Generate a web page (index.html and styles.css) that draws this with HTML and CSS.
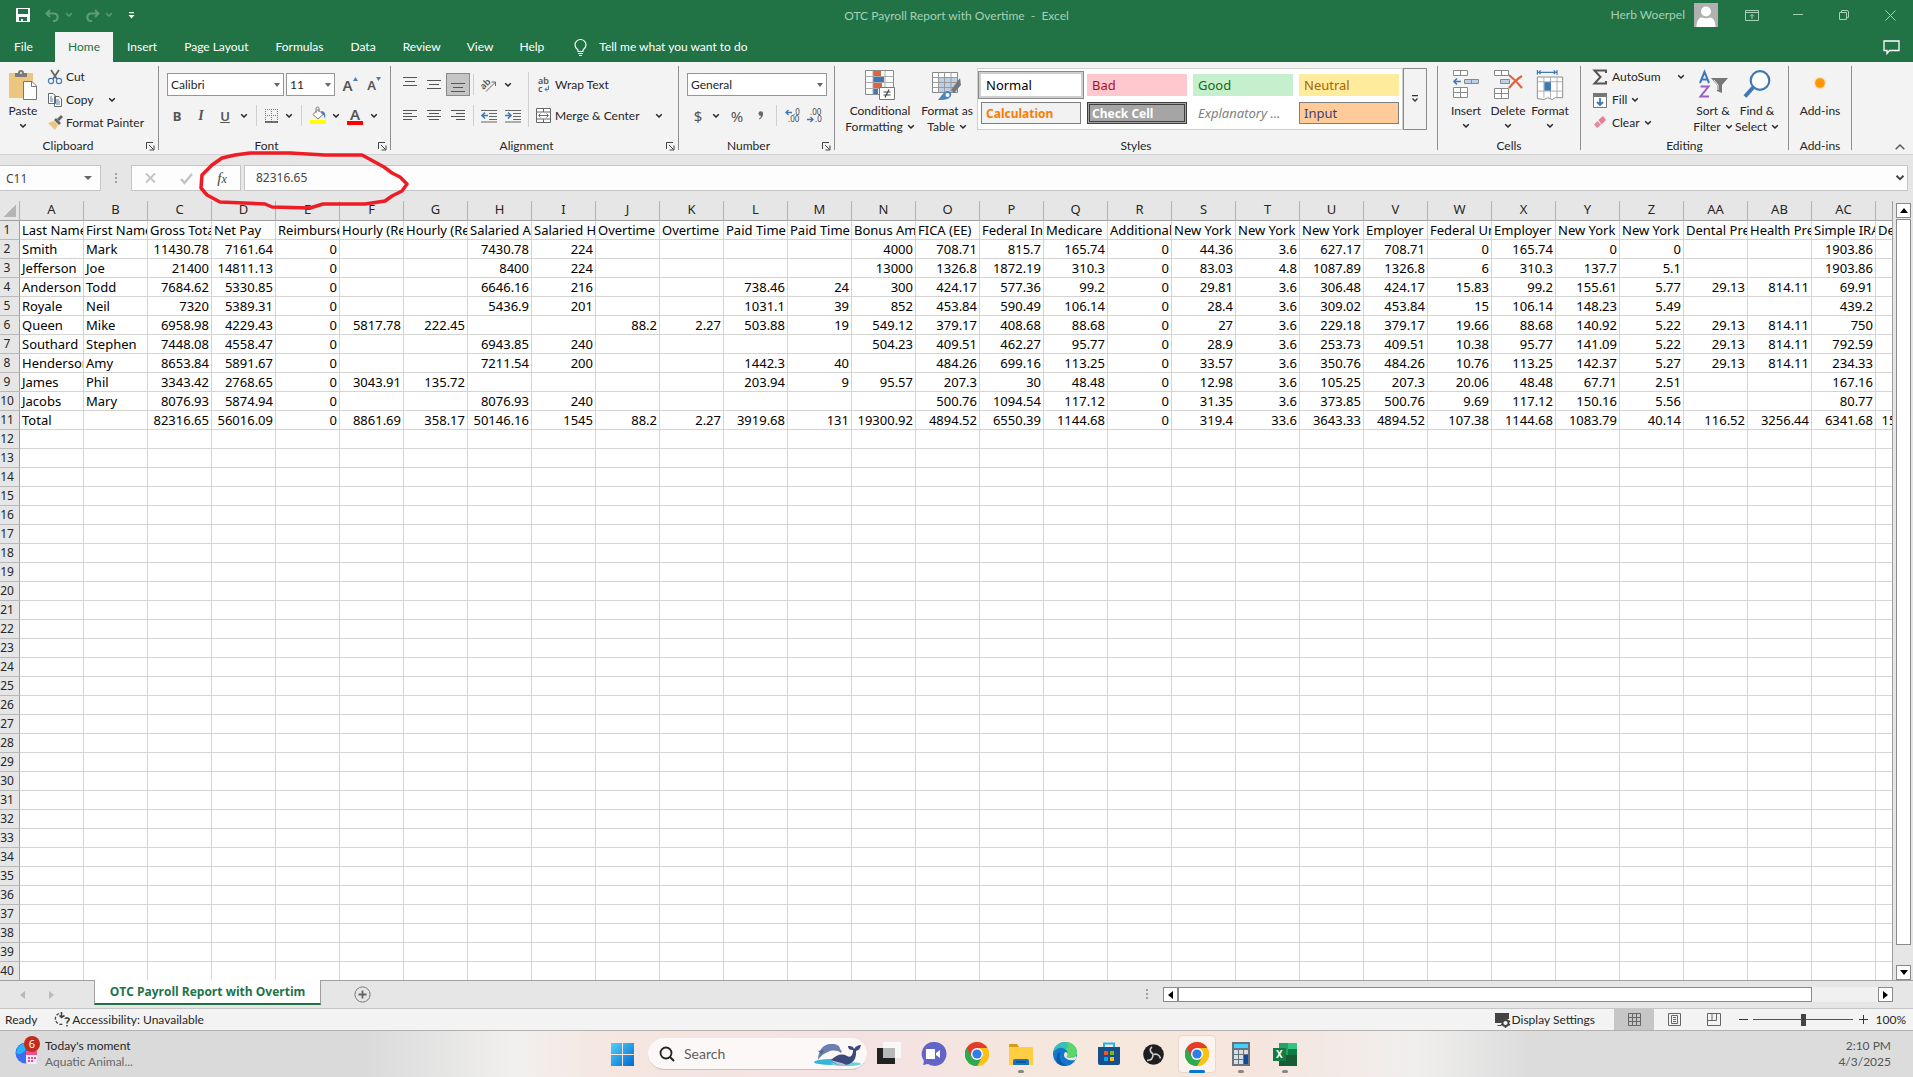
FILE: index.html
```
<!DOCTYPE html>
<html lang="en">
<head>
<meta charset="utf-8">
<title>OTC Payroll Report with Overtime - Excel</title>
<link rel="stylesheet" href="styles.css">
</head>
<body>
<svg class="defs" aria-hidden="true">
  <symbol id="chev" viewBox="0 0 8 6"><path d="M1.2 1.2 4 4l2.800-2.800" fill="none" stroke="currentColor" stroke-width="1.500"/></symbol>
  <symbol id="launch" viewBox="0 0 9 9"><path d="M.5 7V.5H7M3 3l4.500 4.500M8 3.500V8H3.500" fill="none" stroke="#444" stroke-width="1"/></symbol>
  <symbol id="chrome" viewBox="0 0 24 24"><circle cx="12" cy="12" r="12" fill="#fbc116"/><path d="M1.600 6A12 12 0 0 0 12 24l5.200-9L12 12z" fill="#2da94f"/><path d="M12 6h10.400A12 12 0 0 1 12 24l5.200-9z" fill="#fbc116"/><path d="M1.600 6 6.800 15 12 12V6h10.400A12 12 0 0 0 1.600 6z" fill="#e33b2e"/><path d="M1.600 6A12 12 0 0 0 12 24l5.200-9H6.800z" fill="#2da94f"/><circle cx="12" cy="12" r="6" fill="#fff"/><circle cx="12" cy="12" r="4.600" fill="#2f7de9"/></symbol>
</svg>

<header class="top">
  <div class="titlebar">
    <div class="quick">
      <button aria-label="Save"><svg width="14" height="14" viewBox="0 0 14 14"><path d="M0 0h14v14H0z" fill="#fff"/><path d="M2 1h10v5H2zM3 9h8v4H3z" fill="#217346"/><path d="M5 11h2v2H5z" fill="#fff"/></svg></button>
      <button class="dim" aria-label="Undo"><svg width="15" height="13" viewBox="0 0 15 13"><path d="M5 1 1.500 4.500 5 8M2 4.500h7.500a3.800 3.800 0 0 1 0 7.500H8" fill="none" stroke="currentColor" stroke-width="2"/></svg></button>
      <button class="dim" aria-label="Undo list"><svg width="8" height="6"><use href="#chev"/></svg></button>
      <button class="dim" aria-label="Redo"><svg width="15" height="13" viewBox="0 0 15 13"><path d="M10 1l3.500 3.500L10 8M13 4.500H5.500a3.800 3.800 0 0 0 0 7.500H7" fill="none" stroke="currentColor" stroke-width="2"/></svg></button>
      <button class="dim" aria-label="Redo list"><svg width="8" height="6"><use href="#chev"/></svg></button>
      <button aria-label="Customize toolbar"><svg width="7" height="7" viewBox="0 0 7 7"><path d="M1 0h5v1.300H1zM.5 3h6l-3 3.500z" fill="#fff"/></svg></button>
    </div>
    <h1>OTC Payroll Report with Overtime&nbsp; -&nbsp; Excel</h1>
    <div class="winbar">
      <span>Herb Woerpel</span>
      <svg class="avatar" width="24" height="24" viewBox="0 0 24 24"><path d="M0 0h24v24H0z" fill="#b0b0b0"/><circle cx="12" cy="8.500" r="5" fill="#fff"/><path d="M2.500 24c0-7 3-9.500 5.500-9.500 2 1 6 1 8 0 2.500 0 5.500 2.500 5.500 9.500z" fill="#fff"/></svg>
      <button aria-label="Ribbon display options"><svg width="14" height="11" viewBox="0 0 14 11"><path d="M.5.500h13v10H.5zM.5 2.500h13M7 9V4.500M5 6.300 7 4.300l2 2" fill="none" stroke="currentColor"/></svg></button>
      <button aria-label="Minimize"><svg width="10" height="2" viewBox="0 0 10 2"><path d="M0 .5h10" stroke="currentColor"/></svg></button>
      <button aria-label="Restore"><svg width="10" height="10" viewBox="0 0 10 10"><path d="M.5 2.500h7v7h-7zM2.500 2V.5H8q1.500 0 1.500 1.500v5.500H8" fill="none" stroke="currentColor"/></svg></button>
      <button aria-label="Close"><svg width="11" height="11" viewBox="0 0 11 11"><path d="M.5.500l10 10M10.500.500l-10 10" stroke="currentColor"/></svg></button>
    </div>
  </div>
  <nav class="tabs">
    <button class="file">File</button>
    <button class="active">Home</button>
    <button>Insert</button>
    <button>Page Layout</button>
    <button>Formulas</button>
    <button>Data</button>
    <button>Review</button>
    <button>View</button>
    <button>Help</button>
    <button class="tell"><svg width="13" height="17" viewBox="0 0 13 17"><path d="M4 12.500V11C2 9.500 1 8 1 6a5.500 5.500 0 0 1 11 0c0 2-1 3.500-3 5v1.500zM4 14.500h5M5 16.500h3" fill="none" stroke="#fff" stroke-width="1.200"/></svg>Tell me what you want to do</button>
    <button class="comments" aria-label="Comments"><svg width="17" height="15" viewBox="0 0 17 15"><path d="M1 1h15v9.500H6.500L4 13.500v-3H1z" fill="none" stroke="#fff" stroke-width="1.300"/></svg></button>
  </nav>
</header>

<section class="ribbon" aria-label="Ribbon">
  <div class="group clipboard">
    <div class="body">
      <button class="big paste"><svg width="30" height="30" viewBox="0 0 30 30"><path d="M1 3h24v25H1z" fill="#ecc57f"/><path d="M7 3h3a3 3 0 0 1 6 0h3v4H7z" fill="#7a7a7a"/><circle cx="13" cy="3" r="1" fill="#f3f3f3"/><path d="M15.500 11.500H24l4.500 4.500v13.500h-13z" fill="#fff" stroke="#777"/><path d="M23.500 11.500v5h5" fill="none" stroke="#777"/></svg><span>Paste</span><svg width="8" height="6"><use href="#chev"/></svg></button>
      <div class="stack">
        <button><svg width="16" height="16" viewBox="0 0 16 16"><path d="M4 1l6 9M12 1 6 10" stroke="#666" stroke-width="1.800"/><circle cx="4" cy="12" r="2.600" fill="none" stroke="#4a7fb5" stroke-width="1.200"/><circle cx="12" cy="12" r="2.600" fill="none" stroke="#4a7fb5" stroke-width="1.200"/></svg>Cut</button>
        <button><svg width="16" height="16" viewBox="0 0 16 16"><path d="M1.500 1.500H6L8.500 4v7.500h-7zM7.500 4.500H12L14.500 7v7.500h-7z" fill="#fff" stroke="#666"/><path d="M3 5h2M3 7h3M3 9h3M9 8h3M9 10h4M9 12h4" stroke="#4a7fb5"/></svg><span>Copy</span><svg width="8" height="6"><use href="#chev"/></svg></button>
        <button><svg width="16" height="16" viewBox="0 0 16 16"><path d="M1 8l6-2 4 4-3 5z" fill="#ecc57f"/><path d="M7 5l2-2 5 5-2 2z" fill="#666"/><path d="M11 5l4-4" stroke="#666" stroke-width="3"/></svg>Format Painter</button>
      </div>
    </div>
    <div class="label"><span>Clipboard</span><button aria-label="Clipboard settings"><svg width="9" height="9"><use href="#launch"/></svg></button></div>
  </div>

  <div class="group font">
    <div class="body rows">
      <div class="row">
        <div class="combo face"><select aria-label="Font"><option>Calibri</option></select></div>
        <div class="combo size"><select aria-label="Font size"><option>11</option></select></div>
        <button class="t grow">A<svg width="5" height="4" viewBox="0 0 5 4"><path d="M0 4 2.500 0 5 4z" fill="#4a7fb5"/></svg></button>
        <button class="t shrink">A<svg width="5" height="4" viewBox="0 0 5 4"><path d="M0 0 2.500 4 5 0z" fill="#4a7fb5"/></svg></button>
      </div>
      <div class="row letters">
        <button class="t"><b>B</b></button><button class="t"><i>I</i></button><button class="t"><u>U</u></button><button class="ch" aria-label="Underline styles"><svg width="8" height="6"><use href="#chev"/></svg></button>
        <span class="sep"></span>
        <button class="t w20" aria-label="Borders"><svg width="14" height="14" viewBox="0 0 14 14"><path d="M.5 0v13M6.500 0v13M12.500 0v13M0 .5h13M0 6.500h13" stroke="#777" stroke-dasharray="1 1"/><path d="M0 13h13" stroke="#444" stroke-width="1.500"/></svg></button><button class="ch" aria-label="Border styles"><svg width="8" height="6"><use href="#chev"/></svg></button>
        <span class="sep"></span>
        <button class="t w22" aria-label="Fill color"><svg width="17" height="17" viewBox="0 0 17 17"><path d="M3 7.500 8 2.500l5 5-5 4.500z" fill="#fff" stroke="#777"/><path d="M6 6V1.500a1.500 1.500 0 0 1 3 0V5" fill="none" stroke="#777"/><path d="M11 4c4 0 5 3 4 8-1-3-1-4-3-5z" fill="#4a7fb5"/><path d="M0 13h16v4H0z" fill="#ff0"/></svg></button><button class="ch" aria-label="Fill colors"><svg width="8" height="6"><use href="#chev"/></svg></button>
        <button class="t inkcolor">A</button><button class="ch" aria-label="Font colors"><svg width="8" height="6"><use href="#chev"/></svg></button>
      </div>
    </div>
    <div class="label"><span>Font</span><button aria-label="Font settings"><svg width="9" height="9"><use href="#launch"/></svg></button></div>
  </div>

  <div class="group alignment">
    <div class="body">
      <div class="rows">
        <div class="row">
          <button class="t" aria-label="Top align"><svg width="14" height="16" viewBox="0 0 14 16"><path d="M0 .5h14M2 4.500h10M0 8.500h14" stroke="#555"/></svg></button>
          <button class="t" aria-label="Middle align"><svg width="14" height="16" viewBox="0 0 14 16"><path d="M0 3.500h14M2 7.500h10M0 11.500h14" stroke="#555"/></svg></button>
          <button class="t pressed" aria-label="Bottom align"><svg width="14" height="16" viewBox="0 0 14 16"><path d="M0 6.500h14M2 10.500h10M0 14.500h14" stroke="#555"/></svg></button>
          <span class="sep tight"></span>
          <button class="t" aria-label="Orientation"><svg width="17" height="17" viewBox="0 0 17 17"><text x="0" y="10" transform="rotate(-45 6 9)" class="ico-text">ab</text><path d="M5 15.500 14 6.500M10.500 6h4v4" fill="none" stroke="#666"/></svg></button><button class="ch" aria-label="Orientations"><svg width="8" height="6"><use href="#chev"/></svg></button>
        </div>
        <div class="row">
          <button class="t" aria-label="Align left"><svg width="14" height="11" viewBox="0 0 14 11"><path d="M0 .5h14M0 3.500h9M0 6.500h14M0 9.500h9" stroke="#555"/></svg></button>
          <button class="t" aria-label="Center"><svg width="14" height="11" viewBox="0 0 14 11"><path d="M0 .5h14M2 3.500h10M0 6.500h14M2 9.500h10" stroke="#555"/></svg></button>
          <button class="t" aria-label="Align right"><svg width="14" height="11" viewBox="0 0 14 11"><path d="M0 .5h14M5 3.500h9M0 6.500h14M5 9.500h9" stroke="#555"/></svg></button>
          <span class="sep tight"></span>
          <button class="t" aria-label="Decrease indent"><svg width="16" height="14" viewBox="0 0 16 14"><path d="M0 1.500h16M8 4.500h8M8 7.500h8M8 10.500h8M0 13h16" stroke="#666"/><path d="M7 6.500H2M4 3.500l-3 3 3 3" fill="none" stroke="#3f78b4" stroke-width="1.600"/></svg></button>
          <button class="t" aria-label="Increase indent"><svg width="16" height="14" viewBox="0 0 16 14"><path d="M0 1.500h16M8 4.500h8M8 7.500h8M8 10.500h8M0 13h16" stroke="#666"/><path d="M0 6.500h5M3 3.500l3 3-3 3" fill="none" stroke="#3f78b4" stroke-width="1.600"/></svg></button>
        </div>
      </div>
      <span class="sep long"></span>
      <div class="rows wide">
        <div class="row"><button class="wordy"><svg width="16" height="17" viewBox="0 0 16 17"><text x="2" y="8" class="ico-text">ab</text><text x="2" y="16" class="ico-text">c</text><path d="M12.500 9.500v4H9M11 11.500l-2 2 2 2" fill="none" stroke="#3f78b4"/></svg>Wrap Text</button></div>
        <div class="row"><button class="wordy"><svg width="16" height="16" viewBox="0 0 16 16"><path d="M.5.500h14v14H.5zM.5 4h14M.5 11h14M7.500.500V4M7.500 11v3.500" fill="#fff" stroke="#666"/><path d="M3 7.500h9M4.500 5.500l-2 2 2 2M10.500 5.500l2 2-2 2" fill="none" stroke="#3f78b4"/></svg>Merge &amp; Center</button><button class="ch" aria-label="Merge options"><svg width="8" height="6"><use href="#chev"/></svg></button></div>
      </div>
    </div>
    <div class="label"><span>Alignment</span><button aria-label="Alignment settings"><svg width="9" height="9"><use href="#launch"/></svg></button></div>
  </div>

  <div class="group number">
    <div class="body rows">
      <div class="row"><div class="combo format"><select aria-label="Number format"><option>General</option></select></div></div>
      <div class="row">
        <button class="t w22 sym">$</button><button class="ch" aria-label="Currencies"><svg width="8" height="6"><use href="#chev"/></svg></button>
        <button class="t w28 sym">%</button><button class="t w20 comma" aria-label="Comma style"><svg width="6" height="9" viewBox="0 0 6 9"><path d="M.5 2.500a2.300 2.300 0 0 1 4.600 0c0 3-1.600 5-3.800 6l-.3-.8C2.200 7 2.900 6 3 4.800 1.500 5 .5 3.800.5 2.500z" fill="#666"/></svg></button>
        <span class="sep"></span>
        <button class="t w22" aria-label="Increase decimal"><svg width="16" height="14" viewBox="0 0 16 14"><text x="8" y="6" class="dec">.0</text><text x="3" y="13" class="dec">.00</text><path d="M7 3.500H1M3.500 1 1 3.500 3.500 6" fill="none" stroke="#3f78b4" stroke-width="1.300"/></svg></button>
        <button class="t w22" aria-label="Decrease decimal"><svg width="16" height="14" viewBox="0 0 16 14"><text x="3" y="6" class="dec">.00</text><text x="8" y="13" class="dec">.0</text><path d="M0 10.500h6M3.500 8 6 10.500 3.500 13" fill="none" stroke="#3f78b4" stroke-width="1.300"/></svg></button>
      </div>
    </div>
    <div class="label"><span>Number</span><button aria-label="Number settings"><svg width="9" height="9"><use href="#launch"/></svg></button></div>
  </div>

  <div class="group styles">
    <div class="body">
      <button class="big cond"><svg width="30" height="30" viewBox="0 0 30 30"><path d="M.5.500h28v24H.5z" fill="#fff" stroke="#888"/><path d="M8 1h8v5H8zM8 13h9v5H8z" fill="#e0623f"/><path d="M8 7h11v5H8zM8 19h5v5H8z" fill="#3f78b4"/><path d="M.5 6.500h28M.5 12.500h28M.5 18.500h28M8 .5v24M20 .5v24" stroke="#aaa" fill="none"/><path d="M14.500 17.500h15v12h-15z" fill="#fff" stroke="#777"/><path d="M18.500 22h7M18.500 25h7M24 19.500l-4 8" stroke="#444" stroke-width="1.200"/></svg><span>Conditional</span><span>Formatting <svg width="8" height="6"><use href="#chev"/></svg></span></button>
      <button class="big fmt"><svg width="30" height="30" viewBox="0 0 30 30"><path d="M.5 2.500h25v20H.5z" fill="#fff" stroke="#888"/><path d="M7 8h18v14H7z" fill="#bcd0e8"/><path d="M.5 7.500h25M.5 12.500h25M.5 17.500h25M6.500 2.500v20M12.500 2.500v20M19 2.500v20" stroke="#9a9a9a" fill="none"/><path d="M19 20 28 8l1 7-7 8z" fill="#777"/><path d="M6 30c3-3 5-8 9-9 3 0 5 2 4 5-2 4-8 4-13 4z" fill="#4a85bf"/><circle cx="15.500" cy="25" r="2" fill="#fff"/></svg><span>Format as</span><span>Table <svg width="8" height="6"><use href="#chev"/></svg></span></button>
      <div class="gallery">
        <div class="swatches">
          <button class="s-normal">Normal</button><button class="s-bad">Bad</button><button class="s-good">Good</button><button class="s-neutral">Neutral</button>
          <button class="s-calc">Calculation</button><button class="s-check">Check Cell</button><button class="s-expl">Explanatory ...</button><button class="s-input">Input</button>
        </div>
        <button class="more" aria-label="More styles"><svg width="8" height="8" viewBox="0 0 8 8"><path d="M1 .7h6M1.500 3.500 4 6l2.500-2.500" fill="none" stroke="#333" stroke-width="1.300"/></svg></button>
      </div>
    </div>
    <div class="label"><span>Styles</span></div>
  </div>

  <div class="group cells">
    <div class="body">
      <button class="big"><svg width="28" height="30" viewBox="0 0 28 30"><path d="M1.500.500h14v5h-14zM8.500.500v5M1.500 17.500h14v10h-14zM1.500 22.500h14M8.500 17.500v10" fill="#fff" stroke="#888"/><path d="M12.500 9.500h14v4h-14zM19.500 9.500v4" fill="#bcd0e8" stroke="#888"/><path d="M9 11.500H2.500M5 8.500l-3 3 3 3" fill="none" stroke="#3f78b4" stroke-width="1.600"/></svg><span>Insert</span><svg width="8" height="6"><use href="#chev"/></svg></button>
      <button class="big"><svg width="30" height="30" viewBox="0 0 30 30"><path d="M1.500.500h14v5h-14zM8.500.500v5M1.500 18.500h14v10h-14zM1.500 23.500h14M8.500 18.500v10" fill="#fff" stroke="#888"/><path d="M7.500 9.500h9v4h-9z" fill="#bcd0e8" stroke="#888"/><path d="M16 5c5 4 9 8 13 13M29 6c-5 3-9 7-13 12" fill="none" stroke="#e0623f" stroke-width="2.200"/></svg><span>Delete</span><svg width="8" height="6"><use href="#chev"/></svg></button>
      <button class="big"><svg width="30" height="32" viewBox="0 0 30 32"><path d="M1 2.500h22M1.500 0v5M22.500 0v5M5 .5l-2 2 2 2M19 .5l2 2-2 2" fill="none" stroke="#3f78b4" stroke-width="1.200"/><path d="M1.500 7.500h27v22h-8l-3 2-5-2-4 2-7-1z" fill="#fff" stroke="#888"/><path d="M1.500 12.500h27M1.500 22.500h27M8.500 7.500v22M15.500 7.500v22M22.500 7.500v22" stroke="#aaa" fill="none"/><path d="M9 13h7v9H9z" fill="#3f78b4"/></svg><span>Format</span><svg width="8" height="6"><use href="#chev"/></svg></button>
    </div>
    <div class="label"><span>Cells</span></div>
  </div>

  <div class="group editing">
    <div class="body">
      <div class="stack">
        <button><svg width="16" height="16" viewBox="0 0 16 16"><path d="M14 4V1.500H2.500L8.500 8l-6 6.500H14V12" fill="none" stroke="#555" stroke-width="2"/></svg><span>AutoSum</span><svg width="8" height="6"><use href="#chev"/></svg></button>
        <button><svg width="16" height="16" viewBox="0 0 16 16"><path d="M1.500 1.500h13v14h-13z" fill="#fff" stroke="#777"/><path d="M1 1h14v4H1z" fill="#777"/><path d="M8 6v7M5 10l3 3 3-3" fill="none" stroke="#3f78b4" stroke-width="1.800"/></svg>Fill<svg width="8" height="6"><use href="#chev"/></svg></button>
        <button><svg width="16" height="16" viewBox="0 0 16 16"><path d="M6.500 5 11 1l3 4-4.500 4.500z" fill="#e77e92"/><path d="M5.500 6 9 10l-4 3-3-3.500z" fill="#e58b9c"/></svg>Clear<svg width="8" height="6"><use href="#chev"/></svg></button>
      </div>
      <button class="big"><svg width="30" height="30" viewBox="0 0 30 30"><path d="M2 13 6.500 2 11 13M3.500 9.500h6" fill="none" stroke="#3f78b4" stroke-width="2"/><path d="M2.500 16.500h8l-8 10H11" fill="none" stroke="#9b5fc0" stroke-width="2"/><path d="M13 8h17l-6 7v8l-5-2v-6z" fill="#777"/><path d="M16 10l4 5v5" fill="none" stroke="#f3f3f3"/></svg><span>Sort &amp;</span><span>Filter <svg width="8" height="6"><use href="#chev"/></svg></span></button>
      <button class="big"><svg width="30" height="30" viewBox="0 0 30 30"><circle cx="18" cy="10.500" r="9.300" fill="#fff" stroke="#3f78b4" stroke-width="2.200"/><path d="M11.500 17 3 26.500" stroke="#3f78b4" stroke-width="4"/></svg><span>Find &amp;</span><span>Select <svg width="8" height="6"><use href="#chev"/></svg></span></button>
    </div>
    <div class="label"><span>Editing</span></div>
  </div>

  <div class="group addins">
    <div class="body"><button class="big"><svg width="30" height="30" viewBox="0 0 30 30"><circle cx="15" cy="13" r="6" fill="#ffd08a" opacity=".7"/><circle cx="15" cy="13" r="4.800" fill="#ff9500"/></svg><span>Add-ins</span></button></div>
    <div class="label"><span>Add-ins</span></div>
  </div>
  <div class="tail"><button aria-label="Collapse ribbon"><svg width="10" height="6" viewBox="0 0 10 6"><path d="M.7 5.300 5 1l4.300 4.300" fill="none" stroke="#555" stroke-width="1.400"/></svg></button></div>
</section>

<section class="formula" aria-label="Formula bar">
  <div class="namebox"><input aria-label="Name box" value="C11"></div>
  <span class="grip"></span>
  <div class="fxbox">
    <button aria-label="Cancel"><svg width="11" height="10" viewBox="0 0 11 10"><path d="M1 .5l9 9M10 .5l-9 9" stroke="#c3c3c3" stroke-width="1.800"/></svg></button>
    <button aria-label="Enter"><svg width="13" height="11" viewBox="0 0 13 11"><path d="M1 6l3.500 4L12 1" fill="none" stroke="#c3c3c3" stroke-width="2.400"/></svg></button>
    <button class="fx"><i>f<small>x</small></i></button>
  </div>
  <div class="entry"><input aria-label="Formula" value="82316.65"><button aria-label="Expand formula bar"><svg width="10" height="8"><use href="#chev"/></svg></button></div>
</section>

<main class="work">
  <div class="sheet"><table><colgroup id="cols"></colgroup><thead id="head"></thead><tbody id="rows"></tbody></table></div>
  <div class="vscroll">
    <button aria-label="Scroll up"><svg width="8" height="5" viewBox="0 0 8 5"><path d="M0 5 4 0l4 5z"/></svg></button>
    <span class="thumb"></span>
    <button aria-label="Scroll down"><svg width="8" height="5" viewBox="0 0 8 5"><path d="M0 0 4 5l4-5z"/></svg></button>
  </div>
</main>

<div class="sheettabs">
  <button class="nav" aria-label="Previous sheet"><svg width="5" height="8" viewBox="0 0 5 8"><path d="M5 0 0 4l5 4z" fill="#b9b9b9"/></svg></button>
  <button class="nav" aria-label="Next sheet"><svg width="5" height="8" viewBox="0 0 5 8"><path d="M0 0l5 4-5 4z" fill="#b9b9b9"/></svg></button>
  <button class="tab">OTC Payroll Report with Overtim</button>
  <button class="add" aria-label="New sheet"><svg width="17" height="17" viewBox="0 0 17 17"><circle cx="8.500" cy="8.500" r="7.600" fill="none" stroke="#777"/><path d="M8.500 4.500v8M4.500 8.500h8" stroke="#666" stroke-width="1.800"/></svg></button>
  <span class="grip"></span>
  <div class="hscroll">
    <button aria-label="Scroll left"><svg width="5" height="8" viewBox="0 0 5 8"><path d="M5 0 0 4l5 4z"/></svg></button>
    <span class="thumb"></span><span class="track"></span>
    <button aria-label="Scroll right"><svg width="5" height="8" viewBox="0 0 5 8"><path d="M0 0l5 4-5 4z"/></svg></button>
  </div>
</div>

<footer class="status">
  <span>Ready</span>
  <button class="acc"><svg width="17" height="15" viewBox="0 0 17 15"><path d="M5 1.500A5.500 5.500 0 1 0 9 12" fill="none" stroke="#444" stroke-width="1.300" stroke-dasharray="3 1.500"/><path d="M7.500 0v5M5.500 3.500l2 2 3-2M11 7c1-2 5-1 4 1-1 1.500-2 1.500-2 3.500M13 13v1.500" fill="none" stroke="#444" stroke-width="1.600"/></svg>Accessibility: Unavailable</button>
  <button class="disp"><svg width="16" height="16" viewBox="0 0 16 16"><path d="M0 1h14v6h-4l-3 4H0zM3 13h3v1H2z" fill="#444"/><circle cx="10.500" cy="11" r="3" fill="#f3f3f3" stroke="#444" stroke-width="1.800"/><path d="M10.500 6v2M10.500 14v2M6 9l2 1M13 12l2 1M6 13l2-1M13 10l2-1" stroke="#444" stroke-width="1.500"/></svg>Display Settings</button>
  <button class="view on" aria-label="Normal view"><svg width="13" height="13" viewBox="0 0 13 13"><path d="M.5.500h12v12H.5zM.5 4.500h12M.5 8.500h12M4.500.500v12M8.500.500v12" fill="none" stroke="#666"/></svg></button>
  <button class="view" aria-label="Page layout view"><svg width="13" height="13" viewBox="0 0 13 13"><path d="M.5.500h12v12H.5zM3.500 2.500h6v8h-6zM5 4.500h3M5 6.500h3M5 8.500h3" fill="none" stroke="#666"/></svg></button>
  <button class="view" aria-label="Page break view"><svg width="14" height="13" viewBox="0 0 14 13"><path d="M.5.500h13v12H.5zM.5 7.500h9V.5M5 .5v7" fill="none" stroke="#666"/></svg></button>
  <div class="zoom"><button aria-label="Zoom out"><svg width="9" height="9" viewBox="0 0 9 9"><path d="M0 4.500h9" stroke="#333"/></svg></button><input type="range" min="10" max="190" value="100" aria-label="Zoom"><button aria-label="Zoom in"><svg width="9" height="9" viewBox="0 0 9 9"><path d="M0 4.500h9M4.500 0v9" stroke="#333"/></svg></button><output>100%</output></div>
</footer>

<div class="taskbar">
  <button class="widget">
    <span class="globe"><svg width="24" height="24" viewBox="0 0 24 24"><circle cx="11" cy="11" r="10.500" fill="#3a6df0"/><path d="M3 5c4-4 9-5 12-3-1 4-5 3-5 7-3 1-4 5-9 2z" fill="#27b5f7"/><path d="M11 10h11v10a2 2 0 0 1-2 2h-7a2 2 0 0 1-2-2z" fill="#fbe9f4"/><path d="M11 9h11v4H11z" fill="#f0518d"/><path d="M13 15h2v2h-2zM16 15h2v2h-2zM19 15h2v2h-2zM13 18h2v2h-2zM16 18h2v2h-2z" fill="#e64a9b"/></svg><b class="badge">6</b></span>
    <span class="news"><span>Today's moment</span><span class="soft">Aquatic Animal...</span></span>
  </button>
  <div class="apps">
    <button class="app" aria-label="Start"><svg width="23" height="23" viewBox="0 0 23 23"><defs><linearGradient id="win" x2="1" y2="1"><stop stop-color="#52d0fb"/><stop offset="1" stop-color="#0069cf"/></linearGradient></defs><path d="M0 0h11v11H0zM12 0h11v11H12zM0 12h11v11H0zM12 12h11v11H12z" fill="url(#win)"/></svg></button>
    <label class="search"><svg width="16" height="16" viewBox="0 0 16 16"><circle cx="7" cy="7" r="5.500" fill="none" stroke="#222" stroke-width="1.800"/><path d="M11 11l4 4" stroke="#222" stroke-width="2"/></svg><input placeholder="Search" aria-label="Search">
      <svg width="48" height="24" viewBox="0 0 48 24"><ellipse cx="17" cy="20" rx="17" ry="3" fill="#35b6d6"/><ellipse cx="32" cy="22" rx="15" ry="2" fill="#6fd0e0"/><path d="M4 18C4 8 10 1 18 2c5 0 8 2 8 5 2 2 2 3 1 4-4-3-9-3-13-1-5 2-7 4-10 8z" fill="#6c7fae"/><path d="M10 8 4 9l4 3z" fill="#51649a"/><path d="M17 18c5-5 11-7 16-4 4 2 6-1 6-6-3 0-5-1-5-4 3 0 5 0 6 3 2-3 4-4 7-4-1 4-2 5-5 6 1 9-5 15-14 14-5 0-9-2-11-5z" fill="#3b4a7c"/><path d="M17 18c5 2 11 2 15 5-6 1-12-1-15-5z" fill="#b7bfd8"/></svg></label>
    <button class="app" aria-label="Task view"><svg width="24" height="24" viewBox="0 0 24 24"><path d="M0 6h18v16H0z" fill="#222"/><path d="M6 0h18v16H6z" fill="#f8f8f8"/><path d="M6 6h12v10H6z" fill="#b8b8b8"/></svg></button>
    <button class="app" aria-label="Chat"><svg width="24" height="24" viewBox="0 0 24 24"><path d="M12 0a12 12 0 1 1-5 22l-5 1 1-4A12 12 0 0 1 12 0z" fill="#6264c7"/><path d="M5 7h9v10H5zM15 11l4-3v8l-4-3z" fill="#fff"/></svg></button>
    <button class="app" aria-label="Chrome"><svg width="24" height="24"><use href="#chrome"/></svg></button>
    <button class="app run" aria-label="File Explorer"><svg width="24" height="22" viewBox="0 0 24 22"><path d="M0 2q0-1 1-1h7l2 3H0z" fill="#d99a12"/><path d="M0 4h23q1 0 1 1v17H0z" fill="#ffce42"/><path d="M4 18q0-2 2-2h12q2 0 2 2v4H4z" fill="#1a72c4"/><path d="M7 19h10" stroke="#0c4d91" stroke-width="1.500"/></svg></button>
    <button class="app" aria-label="Edge"><svg width="24" height="24" viewBox="0 0 24 24"><circle cx="12" cy="12" r="12" fill="#1377cc"/><path d="M0 11C1 4 6 0 12 0c7 0 12 5 12 10 0 4-3 6-7 6-3 0-4-1-3-2 3-5-3-9-8-8-3 1-5 3-6 5z" fill="#35c1b8"/><path d="M12 0c7 0 12 5 12 10 0 4-3 6-7 6-3 0-4-1-3-2 2-3 0-6-2-7 4-1 5-4 0-7z" fill="#5bd668"/><path d="M14 14c-1 1 0 2 3 2 3 0 5-1 6-2 1 1 0 3-1 4-5 1-11-1-11-5 0-2 1-3 2-3 2 1 2 2 1 4z" fill="#f7e8df"/><path d="M8 10c-4 5 0 12 6 13.800A12 12 0 0 1 4 21C3 15 4 11 8 10z" fill="#0d56a8"/></svg></button>
    <button class="app" aria-label="Store"><svg width="24" height="24" viewBox="0 0 24 24"><path d="M7 5V1.500h10V5" fill="none" stroke="#1db4f0" stroke-width="2"/><path d="M1 5h22v16q0 2-2 2H3q-2 0-2-2z" fill="#174f8c"/><path d="M7 9h4v4H7z" fill="#f35325"/><path d="M13 9h4v4h-4z" fill="#81bc06"/><path d="M7 15h4v4H7z" fill="#05a6f0"/><path d="M13 15h4v4h-4z" fill="#ffba08"/></svg></button>
    <button class="app" aria-label="OBS"><svg width="21" height="21" viewBox="0 0 21 21"><circle cx="10.500" cy="10.500" r="10.300" fill="#1e1d20"/><path d="M10 10C7 8 6 5 9 3M10.500 10.500c3-1 6 0 7 4M10 10.500c0 4-2 6-6 6" fill="none" stroke="#cfcfcf" stroke-width="1.600"/></svg></button>
    <button class="app open" aria-label="Chrome window"><svg width="24" height="24"><use href="#chrome"/></svg></button>
    <button class="app run" aria-label="Calculator"><svg width="18" height="24" viewBox="0 0 18 24"><path d="M0 0h18v24H0z" fill="#69737d"/><path d="M2 2h14v4H2z" fill="#3fd2fa"/><path d="M2 8h4v4H2zM7 8h4v4H7zM12 8h4v4h-4zM2 13h4v4H2zM7 13h4v4H7zM2 18h4v4H2zM7 18h4v4H7z" fill="#d7dde2"/><path d="M12 13h4v9h-4z" fill="#0f4a94"/></svg></button>
    <button class="app run" aria-label="Excel"><svg width="24" height="23" viewBox="0 0 24 23"><path d="M6 0h9v12H6z" fill="#21a366"/><path d="M15 0h9v6h-9z" fill="#33c481"/><path d="M15 6h9v6h-9z" fill="#107c41"/><path d="M6 12h18v11H6z" fill="#185c37"/><path d="M0 5h13v13H0z" fill="#107c41"/><text x="3" y="15" class="xl">X</text></svg></button>
  </div>
  <button class="clock"><span>2:10 PM</span><span>4/3/2025</span></button>
</div>

<svg class="markup" width="216" height="62" viewBox="196 148 216 62" aria-hidden="true"><path d="M201 188 202 175 212 165 222 158 235 155 250 153 290 153 325 155 362 155 373 161 384 167 392 173 400 177 407 184 402 191 392 196 385 201 365 204 323 204 310 208 272 207 265 204 220 202 207 195z" fill="none" stroke="#ee1c24" stroke-width="3.500" stroke-linejoin="round"/></svg>
<script src="sheet.js"></script>
</body>
</html>
```
FILE: styles.css
```
:root {
  --green: #217346;
  --ui: Lato, "Noto Sans", sans-serif;
  --cell: "Noto Sans", "Open Sans", sans-serif;
}
* { box-sizing: border-box; }
body {
  margin: 0;
  height: 100vh;
  display: flex;
  flex-direction: column;
  overflow: hidden;
  position: relative;
  font: 12px/16px var(--ui);
  color: #262626;
  background: #e6e6e6;
}
button, input, select { font: inherit; color: inherit; }
button { border: 0; padding: 0; background: none; white-space: nowrap; }
svg { display: block; flex: none; overflow: visible; }
.defs { position: absolute; width: 0; height: 0; overflow: hidden; }

/* title bar and tabs */
.top { background: var(--green); color: #fff; flex: none; }
.titlebar { height: 32px; display: grid; grid-template-columns: 1fr auto 1fr; }
.titlebar h1 { margin: 0; font: 12px/32px var(--ui); color: #a6d0b6; }
.quick { display: flex; align-items: center; gap: 9px; padding-left: 16px; height: 30px; }
.quick button:nth-child(2), .quick button:nth-child(4) { margin-left: 6px; }
.quick button:nth-child(3), .quick button:nth-child(5) { margin-left: -4px; }
.quick button:last-child { margin-left: 6px; }
.quick button:nth-child(4) { margin-left: 3px; }
.dim { color: #5c9c77; }
.winbar { display: flex; justify-content: flex-end; align-items: center; height: 30px; color: #a6d0b6; }
.winbar .avatar { margin: 0 11px 0 9px; }
.winbar button { width: 46px; height: 26px; display: grid; place-items: center; }
.tabs { display: flex; height: 30px; }
.tabs button { padding: 0 13px; display: flex; align-items: center; }
.tabs button:nth-child(n+3):nth-child(-n+7) { padding-left: 14px; }
.tabs .file { width: 55px; padding: 0 14px; }
.tabs .active { background: #f3f3f3; color: var(--green); width: 58px; justify-content: center; padding: 0; }
.tabs .tell { margin-left: 4px; gap: 12px; }
.tabs .comments { margin-left: auto; }

/* ribbon */
.ribbon { display: flex; flex: none; background: #f3f3f3; height: 93px; border-bottom: 1px solid #d2d2d2; }
.group {
  flex: none;
  display: flex;
  flex-direction: column;
  padding: 4px 1px 0 0;
  background: linear-gradient(#8f8f8f, #8f8f8f) right 4px / 1px 84px no-repeat;
}
.body { display: flex; height: 72px; align-items: flex-start; }
.label { display: flex; height: 16px; }
.label span { flex: 1; text-align: center; }
.label button { width: 16px; display: grid; place-items: center; }
.clipboard { width: 159px; }
.clipboard .label span { padding-right: 6px; }
.font { width: 232px; }
.alignment { width: 288px; }
.number { width: 156px; }
.styles { width: 603px; }
.font > .body, .number > .body, .styles > .body { padding-left: 8px; }
.alignment > .body, .cells > .body { padding-left: 7px; }
.cells { width: 143px; }
.editing { width: 208px; }
.editing > .body { padding-left: 10px; }
.addins { width: 63px; }
.tail { flex: 1; display: flex; justify-content: flex-end; align-items: flex-end; padding: 0 8px 4px; }

.big { display: flex; flex-direction: column; align-items: center; padding-top: 4px; height: 72px; width: 44px; }
.big > svg:first-child { height: 30px; margin-bottom: 3px; }
.big > svg:last-child { margin-top: 4px; }
.big span { display: flex; align-items: center; gap: 4px; }
.paste { width: 46px; }
.cond { width: 74px; }
.fmt { width: 60px; }
.cells .big { width: 42px; }
.addins .big { width: 62px; }
.stack { display: flex; flex-direction: column; }
.stack button { height: 23px; display: flex; align-items: center; gap: 3px; padding: 0 0 2px 1px; }
.stack button span + svg { margin-left: 12px; }
.editing .stack { width: 100px; }
.editing .stack button { gap: 4px; }

.rows { display: flex; flex-direction: column; gap: 8px; padding-top: 7px; }
.body .rows { height: 72px; }
.body.rows { align-items: flex-start; }
.row { display: flex; height: 23px; align-items: center; }
.row .t { width: 24px; height: 22px; display: grid; place-items: center; color: #555; }
.row .w20 { width: 20px; }
.row .w22 { width: 22px; }
.row .w28 { width: 28px; }
.row .pressed { height: 23px; background: #c5c5c5; border: 1px solid #8a8a8a; }
.ch { width: 14px; height: 22px; display: grid; place-items: center; }
.sep { width: 1px; height: 21px; margin: 0 5px; background: #d0d0d0; }
.sep.tight { margin: 0 3px; }
.sep.long { height: 55px; margin: 6px 3px 0; }
.combo { position: relative; height: 23px; }
.combo select {
  appearance: none;
  width: 100%;
  height: 23px;
  border: 1px solid #969696;
  border-radius: 0;
  background: #fff;
  padding: 0 3px;
}
.combo::after, .namebox::after {
  content: "";
  position: absolute;
  right: 4px;
  top: 10px;
  border: 3px solid transparent;
  border-top: 4px solid #666;
  border-bottom: 0;
}
.face { width: 117px; margin-right: 2px; }
.size { width: 49px; margin-right: 3px; }
.format { width: 140px; }
.row .grow, .row .shrink { display: flex; justify-content: center; align-items: flex-start; font: 600 15px/22px var(--cell); }
.row .shrink { font-size: 13px; }
.grow svg, .shrink svg { margin-top: 3px; }
.letters { margin-left: -2px; font: 13px/16px var(--cell); }
.letters i { font-weight: 600; font-family: "Liberation Serif", serif; font-size: 14px; }
.letters u { font-weight: 600; }
.row .inkcolor { font: 600 15px/13px var(--cell); background: linear-gradient(#f00, #f00) center bottom 2px / 16px 4px no-repeat; align-items: start; padding-top: 3px; }
.row .sym { font: 15px/22px var(--cell); }
.wide { flex: 1; }
.wordy { display: flex; align-items: center; gap: 3px; padding-left: 4px; }
.wordy + .ch { margin-left: 12px; }
.ico-text { font: 600 9px var(--cell); fill: #555; }
.dec { font: 8px var(--cell); fill: #444; }

.gallery { display: flex; margin-top: 2px; }
.swatches {
  display: grid;
  grid-template-columns: repeat(4, 100px);
  grid-auto-rows: 22px;
  gap: 6px;
  padding: 5px 3px;
  border: 1px solid #d0d0d0;
  background: #fff;
}
.swatches button { text-align: left; padding: 0 4px; font: 13px/19px var(--cell); border: 1px solid transparent; }
.swatches .s-normal { color: #000; box-shadow: 0 0 0 2px #cfcfcf, 0 0 0 3px #8a8a8a; }
.swatches .s-bad { background: #ffc7ce; color: #b0101e; }
.swatches .s-good { background: #c6efce; color: #106b18; }
.swatches .s-neutral { background: #ffeb9c; color: #a8650a; }
.swatches .s-calc { background: #f2f2f2; border-color: #7f7f7f; color: #fa7d00; font-weight: 700; font-size: 12px; }
.swatches .s-check { background: #a5a5a5; border: 3px double #3f3f3f; color: #fff; font: 700 12px/15px var(--cell); padding: 0 2px; }
.swatches .s-expl { color: #7f7f7f; font-style: italic; font-size: 13px; }
.swatches .s-input { background: #ffcc99; border-color: #7f7f7f; color: #3f3f76; }
.more { width: 24px; border: 1px solid #8a8a8a; display: grid; place-items: center; }

/* formula bar */
.formula { flex: none; display: flex; height: 46px; padding: 10px 5px 10px 0; color: #444; font: 13px/24px var(--cell); }
.formula input { width: 100%; border: 0; background: none; padding: 0; height: 24px; }
.namebox { position: relative; width: 101px; border: 1px solid #c6c6c6; border-left: 0; background: #fdfdfd; padding-left: 6px; }
.formula .namebox input, .formula .entry input { font-size: 12px; }
.namebox::after { border-width: 4px; right: 8px; }
.grip { width: 2px; height: 11px; background: repeating-linear-gradient(#a0a0a0 0 2px, transparent 2px 4px); }
.formula .grip { margin: 8px 14px 0; }
.fxbox { display: grid; grid-template-columns: repeat(3, 36px); width: 110px; border: 1px solid #c6c6c6; background: #fdfdfd; margin-right: 3px; }
.fxbox button { display: grid; place-items: center; }
.formula .fx { font: 15px/20px "Liberation Serif", serif; }
.fx small { font-size: 12px; }
.entry { flex: 1; display: flex; border: 1px solid #c6c6c6; background: #fdfdfd; padding: 0 2px 0 11px; }

/* worksheet */
.work { flex: 1; min-height: 0; display: flex; }
.sheet { flex: 1; min-width: 0; overflow: hidden; border-right: 1px solid #9f9f9f; }
table { table-layout: fixed; width: 1940px; border-spacing: 0; font: 13px/18px var(--cell); color: #000; }
.rowcol { width: 20px; }
.datacol { width: 64px; }
td, th { padding: 0 2px; height: 19px; overflow: hidden; white-space: nowrap; font-weight: 400; border: 0 solid #d4d4d4; border-width: 0 1px 1px 0; }
td { background: #fff; text-align: right; }
td.text { text-align: left; }
thead th { height: 20px; line-height: 17px; padding-bottom: 2px; background: #e6e6e6; border-right-color: #b1b1b1; border-bottom-color: #9f9f9f; color: #262626; }
tbody th { background: #e6e6e6; border-right-color: #9f9f9f; border-bottom-color: #b9b9b9; padding: 0 5px 0 0; color: #262626; font-size: 12px; }
thead th:first-child { background: linear-gradient(135deg, transparent 50%, #b4b4b4 50%) 4px 4px / 12px 12px no-repeat #e6e6e6; }
.vscroll { width: 20px; padding: 2px 2px 0 3px; display: flex; flex-direction: column; }
.vscroll button { height: 15px; background: #fff; border: 1px solid #8a8a8a; display: grid; place-items: center; }
.vscroll .thumb { flex: 1; background: #fff; border: 1px solid #8a8a8a; margin: 1px 0 20px; }

.sheettabs { flex: none; height: 28px; display: flex; border-top: 1px solid #9f9f9f; padding-right: 20px; }
.nav { width: 29px; display: grid; place-items: center; }
.nav:first-child { margin-left: 8px; }
.tab { width: 227px; height: 25px; margin: -1px 0 0 28px; background: #fff; color: var(--green); font: 700 12px/24px "Open Sans", sans-serif; border: 1px solid #9f9f9f; border-top: 0; border-bottom: 2px solid var(--green); }
.add { margin-left: 33px; }
.sheettabs .grip { margin: 8px 15px 0 auto; }
.hscroll { width: 730px; height: 15px; margin-top: 6px; display: flex; background: #f0f0f0; }
.hscroll button { width: 15px; background: #fff; border: 1px solid #8a8a8a; display: grid; place-items: center; }
.hscroll .thumb { flex: 1; background: #fff; border: 1px solid #8a8a8a; }
.hscroll .track { width: 66px; }

.status { flex: none; height: 22px; border-top: 1px solid #c6c6c6; background: #f3f3f3; display: flex; align-items: center; padding: 0 7px 0 5px; }
.acc { display: flex; align-items: center; gap: 1px; margin-left: 17px; }
.disp { display: flex; align-items: center; gap: 1px; margin: 0 19px 0 auto; }
.view { width: 40px; height: 21px; display: grid; place-items: center; }
.view.on { background: #c6c6c6; }
.zoom { display: flex; align-items: center; padding-left: 2px; }
.zoom button { width: 14px; height: 16px; display: grid; place-items: center; }
.zoom input { appearance: none; width: 100px; height: 16px; margin: 0 3px; background: linear-gradient(#555, #555) center / 100% 1px no-repeat; }
.zoom input::-webkit-slider-thumb { appearance: none; width: 5px; height: 12px; background: #444; }
.zoom output { width: 36px; text-align: right; }

/* taskbar */
.taskbar {
  flex: none;
  height: 47px;
  border-top: 1px solid #b4b0b0;
  display: grid;
  grid-template-columns: 1fr auto 1fr;
  background: linear-gradient(90deg, #dadada 0 19%, #f1f0ef 27%, #f5e6e0 32%, #f4e2e3 45%, #f6e8dc 58%, #f5e5de 66%, #f0efee 74%, #dcdcdc 80% 100%);
}
.widget { display: flex; gap: 6px; padding: 7px 0 0 15px; text-align: left; }
.globe { position: relative; width: 24px; height: 30px; padding-top: 4px; }
.badge { position: absolute; left: 9px; top: -2px; width: 16px; height: 16px; border-radius: 8px; background: #c42b1c; color: #fff; font: 11px/16px var(--cell); text-align: center; }
.news { display: flex; flex-direction: column; }
.soft { color: #666; }
.apps { display: flex; align-items: center; padding-right: 6px; }
.app { position: relative; width: 44px; height: 46px; display: grid; place-items: center; }
.search { display: flex; align-items: center; width: 219px; height: 32px; margin-left: 4px; padding: 0 5px 0 11px; border-radius: 16px; background: #fcf8f8; border-bottom: 1px solid #cbbfbf; }
.search input { flex: 1; min-width: 0; border: 0; background: none; padding: 0 0 0 9px; font: 14px/20px var(--ui); }
.search input::placeholder { color: #5f5f5f; opacity: 1; }
.run::after, .open::after { content: ""; position: absolute; bottom: 4px; left: 19px; width: 6px; height: 3px; border-radius: 2px; background: #888; }
.open::before { content: ""; position: absolute; z-index: -1; inset: 4px 3px; border-radius: 4px; background: #fcf3ee; border: 1px solid #e8d9d0; }
.open { z-index: 0; }
.open::after { left: 14px; width: 16px; background: #0078d4; }
.clock { justify-self: end; display: flex; flex-direction: column; align-items: flex-end; padding: 7px 22px 0 0; color: #555; }
.xl { font: 700 10px var(--cell); fill: #fff; }

/* freehand loop drawn over the formula bar */
.markup { position: absolute; left: 196px; top: 148px; }
```
FILE: sheet.js
```
const letters = [..."ABCDEFGHIJKLMNOPQRSTUVWXYZ", "AA", "AB", "AC", ""];
const data = [
  ["Last Name", "First Name", "Gross Total", "Net Pay", "Reimbursement", "Hourly (Regular)", "Hourly (Regular)", "Salaried Amount", "Salaried Hours", "Overtime", "Overtime", "Paid Time", "Paid Time", "Bonus Amount", "FICA (EE)", "Federal Income", "Medicare", "Additional", "New York", "New York", "New York", "Employer", "Federal Unemployment", "Employer", "New York", "New York", "Dental Premium", "Health Premium", "Simple IRA", "Dental"],
  ["Smith", "Mark", 11430.78, 7161.64, 0, "", "", 7430.78, 224, "", "", "", "", 4000, 708.71, 815.7, 165.74, 0, 44.36, 3.6, 627.17, 708.71, 0, 165.74, 0, 0, "", "", 1903.86],
  ["Jefferson", "Joe", 21400, 14811.13, 0, "", "", 8400, 224, "", "", "", "", 13000, 1326.8, 1872.19, 310.3, 0, 83.03, 4.8, 1087.89, 1326.8, 6, 310.3, 137.7, 5.1, "", "", 1903.86],
  ["Anderson", "Todd", 7684.62, 5330.85, 0, "", "", 6646.16, 216, "", "", 738.46, 24, 300, 424.17, 577.36, 99.2, 0, 29.81, 3.6, 306.48, 424.17, 15.83, 99.2, 155.61, 5.77, 29.13, 814.11, 69.91],
  ["Royale", "Neil", 7320, 5389.31, 0, "", "", 5436.9, 201, "", "", 1031.1, 39, 852, 453.84, 590.49, 106.14, 0, 28.4, 3.6, 309.02, 453.84, 15, 106.14, 148.23, 5.49, "", "", 439.2],
  ["Queen", "Mike", 6958.98, 4229.43, 0, 5817.78, 222.45, "", "", 88.2, 2.27, 503.88, 19, 549.12, 379.17, 408.68, 88.68, 0, 27, 3.6, 229.18, 379.17, 19.66, 88.68, 140.92, 5.22, 29.13, 814.11, 750],
  ["Southard", "Stephen", 7448.08, 4558.47, 0, "", "", 6943.85, 240, "", "", "", "", 504.23, 409.51, 462.27, 95.77, 0, 28.9, 3.6, 253.73, 409.51, 10.38, 95.77, 141.09, 5.22, 29.13, 814.11, 792.59],
  ["Henderson", "Amy", 8653.84, 5891.67, 0, "", "", 7211.54, 200, "", "", 1442.3, 40, "", 484.26, 699.16, 113.25, 0, 33.57, 3.6, 350.76, 484.26, 10.76, 113.25, 142.37, 5.27, 29.13, 814.11, 234.33],
  ["James", "Phil", 3343.42, 2768.65, 0, 3043.91, 135.72, "", "", "", "", 203.94, 9, 95.57, 207.3, 30, 48.48, 0, 12.98, 3.6, 105.25, 207.3, 20.06, 48.48, 67.71, 2.51, "", "", 167.16],
  ["Jacobs", "Mary", 8076.93, 5874.94, 0, "", "", 8076.93, 240, "", "", "", "", "", 500.76, 1094.54, 117.12, 0, 31.35, 3.6, 373.85, 500.76, 9.69, 117.12, 150.16, 5.56, "", "", 80.77],
  ["Total", "", 82316.65, 56016.09, 0, 8861.69, 358.17, 50146.16, 1545, 88.2, 2.27, 3919.68, 131, 19300.92, 4894.52, 6550.39, 1144.68, 0, 319.4, 33.6, 3643.33, 4894.52, 107.38, 1144.68, 1083.79, 40.14, 116.52, 3256.44, 6341.68, 15153.85]
];

document.getElementById("cols").innerHTML =
  '<col class="rowcol">' + '<col class="datacol">'.repeat(letters.length);
document.getElementById("head").innerHTML =
  "<tr><th></th>" + letters.map(l => `<th scope="col">${l}</th>`).join("") + "</tr>";

let html = "";
for (let r = 0; r < 40; r++) {
  html += `<tr><th scope="row">${r + 1}</th>`;
  for (let c = 0; c < letters.length; c++) {
    const v = data[r]?.[c] ?? "";
    html += `<td${typeof v === "string" && v ? ' class="text"' : ""}>${v}</td>`;
  }
  html += "</tr>";
}
document.getElementById("rows").innerHTML = html;
```
